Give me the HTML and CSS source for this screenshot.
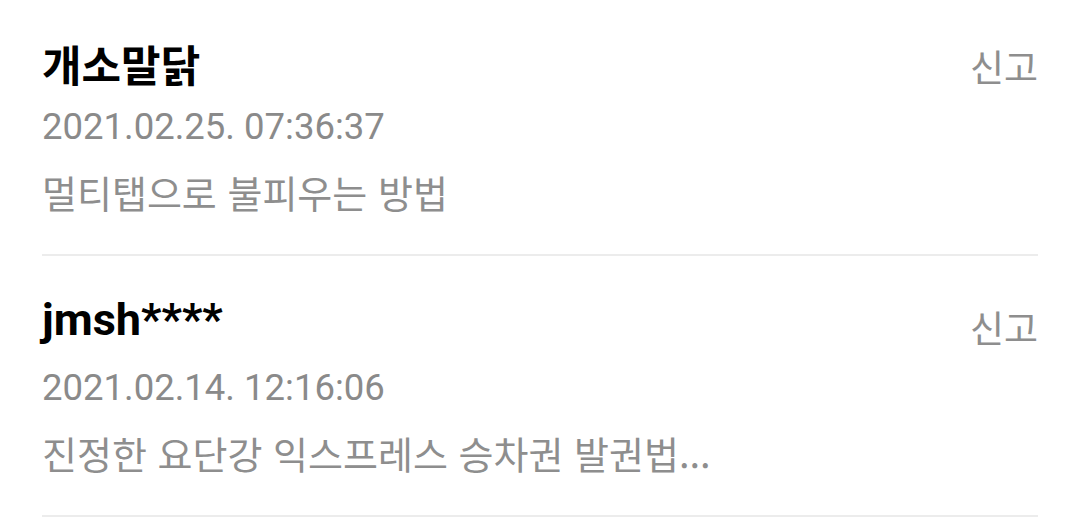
FILE: index.html
```html
<!DOCTYPE html>
<html lang="ko">
<head>
    <meta charset="UTF-8">
    <title>댓글</title>
    <meta name="viewport" content="width=device-width, initial-scale=1.0">
    <link rel="stylesheet" href="styles.css">
</head>
<body>

<div class="list">
    <div class="item">
        <div class="head">
            <div class="name name-ko">개소말닭</div>
            <div class="report">신고</div>
        </div>
        <div class="date">2021.02.25. 07:36:37</div>
        <div class="text">멀티탭으로 불피우는 방법</div>
    </div>
    <div class="item">
        <div class="head">
            <div class="name">jmsh****</div>
            <div class="report">신고</div>
        </div>
        <div class="date">2021.02.14. 12:16:06</div>
        <div class="text">진정한 요단강 익스프레스 승차권 발권법...</div>
    </div>
</div>

</body>
</html>
```

FILE: styles.css
```css
body {
    margin: 0;
    padding: 0;
    background: #fff;
    font-family: Roboto, "Noto Sans CJK KR", sans-serif;
    color: #8c8c8c;
}

.list {
    margin-top: -5px;
    padding: 0 42px;
}

.item {
    border-bottom: 2px solid #ececec;
    padding-bottom: 21px;
}

.head {
    display: flex;
    justify-content: space-between;
    align-items: flex-start;
}

.name {
    padding-top: 20px;
    font-size: 45px;
    line-height: 88px;
    font-weight: 700;
    color: #000;
}

.name-ko {
    font-family: "Noto Sans CJK KR", sans-serif;
    font-size: 43px;
    padding-top: 28px;
    line-height: 80px;
}

.report {
    padding-top: 34px;
    font-family: "Noto Sans CJK KR", sans-serif;
    font-size: 37px;
    line-height: 74px;
    color: #8e8e8e;
}

.date {
    font-size: 36.5px;
    line-height: 48px;
    color: #8a8a8a;
}

.text {
    font-family: "Noto Sans CJK KR", sans-serif;
    font-size: 38px;
    line-height: 82px;
    color: #8e8e8e;
    white-space: nowrap;
    overflow: hidden;
    text-overflow: ellipsis;
}
```
